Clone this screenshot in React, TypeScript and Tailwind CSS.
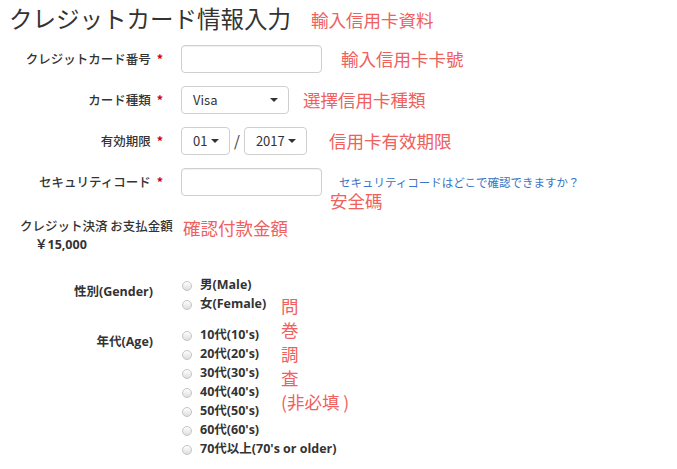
import type React from "react"

const jp = "font-['Noto_Sans_CJK_JP',sans-serif]"
const sans = "font-['Open_Sans','Noto_Sans_CJK_JP',sans-serif]"

export default function App() {
  return (
    <div className={`w-[677px] h-[469px] bg-white text-[#333] overflow-hidden ${jp}`}>
      {/* Header */}
      <div className="flex items-end pl-[9px] pt-[1px] h-[34px]">
        <h1 className="text-[23.5px] leading-[32px] font-normal text-[#333]">クレジットカード情報入力</h1>
        <Note className="ml-[20px] mb-[2px]">輸入信用卡資料</Note>
      </div>

      {/* Card form */}
      <div className="mt-[11px] flex flex-col gap-[13px]">
        <Row label="クレジットカード番号">
          <TextBox />
          <Note className="ml-[19px]">輸入信用卡卡號</Note>
        </Row>
        <Row label="カード種類">
          <Select value="Visa" width="w-[108px]" />
          <Note className="ml-[14px]">選擇信用卡種類</Note>
        </Row>
        <Row label="有効期限">
          <Select value="01" width="w-[49px]" />
          <span className="mx-[4px] text-[15px]">/</span>
          <Select value="2017" width="w-[63px]" />
          <Note className="ml-[22px]">信用卡有效期限</Note>
        </Row>
        <Row label="セキュリティコード" top>
          <TextBox />
          <div className="ml-[17px] mt-[7px] flex flex-col">
            <span className="text-[11.5px] leading-[14px] text-[#3a74c4]">セキュリティコードはどこで確認できますか？</span>
            <Note className="-ml-[9px] leading-[20px]">安全碼</Note>
          </div>
        </Row>
      </div>

      {/* Amount */}
      <div className="mt-[3px] flex items-start">
        <div className="w-[181px] pl-[20px] text-[12.5px] leading-[19px] font-medium whitespace-nowrap">
          <div>クレジット決済 お支払金額</div>
          <div className={`pl-[15px] font-bold ${sans}`}>￥15,000</div>
        </div>
        <Note className="ml-[2px]">確認付款金額</Note>
      </div>

      {/* Survey */}
      <div className={`mt-[22px] flex items-start ${sans}`}>
        <div className="flex flex-col">
          <RadioGroup label="性別(Gender)" options={["男(Male)", "女(Female)"]} />
          <RadioGroup
            className="mt-[12px]"
            label="年代(Age)"
            options={["10代(10's)", "20代(20's)", "30代(30's)", "40代(40's)", "50代(50's)", "60代(60's)", "70代以上(70's or older)"]}
          />
        </div>
        <div className={`mt-[18px] flex flex-col text-[17.5px] leading-[24px] text-[#f0605d] ${jp}`}>
          <span>問</span>
          <span>巻</span>
          <span>調</span>
          <span>査</span>
          <span>(非必填 )</span>
        </div>
      </div>
    </div>
  )
}

function Note({ children, className = "" }: { children: React.ReactNode; className?: string }) {
  return <span className={`text-[17.5px] leading-[24px] text-[#f0605d] whitespace-nowrap ${className}`}>{children}</span>
}

function Row({ label, children, top = false }: { label: string; children: React.ReactNode; top?: boolean }) {
  return (
    <div className="flex items-start">
      <label className="w-[163px] h-[28px] flex items-center justify-end text-[12.5px] font-medium">
        {label}
        <span className="ml-[6px] text-[#d0021b] font-bold">*</span>
      </label>
      <div className={`ml-[18px] flex ${top ? "items-start" : "items-center"}`}>{children}</div>
    </div>
  )
}

function TextBox() {
  return <div className="w-[141px] h-[28px] shrink-0 rounded-[4px] border border-[#cfcfcf] bg-white shadow-[inset_0_1px_1px_rgba(0,0,0,0.06)]" />
}

function Select({ value, width }: { value: string; width: string }) {
  return (
    <div className={`${width} h-[28px] rounded-[4px] border border-[#cfcfcf] bg-white flex items-center justify-between pl-[11px] pr-[10px] text-[13px]`}>
      <span>{value}</span>
      <span className="w-0 h-0 border-l-[4px] border-r-[4px] border-t-[4px] border-l-transparent border-r-transparent border-t-[#333]" />
    </div>
  )
}

function RadioGroup({ label, options, className = "" }: { label: string; options: string[]; className?: string }) {
  return (
    <div className={`flex items-start ${className}`}>
      <div className="w-[153px] pt-[6px] text-right text-[12.5px] font-bold leading-[19px]">{label}</div>
      <div className="ml-[29px] w-[99px] flex flex-col">
        {options.map((o) => (
          <label key={o} className="h-[19px] flex items-center whitespace-nowrap text-[12.5px] font-bold">
            <span className="w-[10px] h-[10px] shrink-0 rounded-full border border-[#c4c4c4] bg-gradient-to-b from-white to-[#dedede]" />
            <span className="ml-[8px]">{o}</span>
          </label>
        ))}
      </div>
    </div>
  )
}
